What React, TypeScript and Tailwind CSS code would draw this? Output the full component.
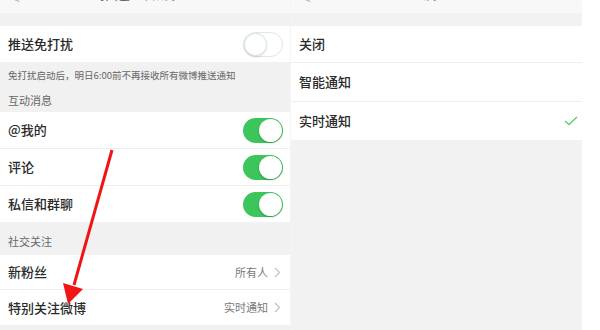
import React from "react";

const font = { fontFamily: '"Noto Sans CJK SC", "Noto Sans", sans-serif' };

function Toggle({ on }: { on: boolean }) {
    if (on) {
        return (
            <div className="relative h-[25px] w-[40px] rounded-full bg-[#3cc55a]">
                <div className="absolute right-[1px] top-[1px] h-[23px] w-[23px] rounded-full bg-white shadow-[0_1px_2px_rgba(0,0,0,0.25)]" />
            </div>
        );
    }
    return (
        <div className="relative h-[25px] w-[40px] rounded-full border border-[#dfe8df] bg-white">
            <div className="absolute left-0 top-0 h-[23px] w-[23px] rounded-full border border-[#d8e6d8] bg-white shadow-[0_1px_2px_rgba(0,0,0,0.12)]" />
        </div>
    );
}

function Chevron() {
    return (
        <svg width="7" height="11" viewBox="0 0 7 11" className="ml-[6px]">
            <path d="M1 1 L5.5 5.5 L1 10" fill="none" stroke="#c4c4c4" strokeWidth="1.3" />
        </svg>
    );
}

function Header({ title }: { title: string }) {
    return (
        <div className="relative h-[13px] overflow-hidden bg-[#f8f8f8]">
            <div className="-mt-[15px] flex h-[16px] items-center justify-center text-[15px] leading-[16px] text-[#666]">
                {title}
            </div>
            <div className="absolute left-[12px] -top-[12px] text-[14px] text-[#aaa]">&lt;</div>
        </div>
    );
}

function Row({
    label,
    h,
    right,
    border = true,
}: {
    label: string;
    h: string;
    right?: React.ReactNode;
    border?: boolean;
}) {
    return (
        <div
            className={`flex ${h} items-center justify-between bg-white pl-[8px] pr-[7px] ${
                border ? "border-b border-[#efefef]" : ""
            }`}
        >
            <span className="text-[13px] font-medium text-[#2a2a2a]">{label}</span>
            {right}
        </div>
    );
}

function Value({ text }: { text: string }) {
    return (
        <div className="flex items-center pr-[2px]">
            <span className="text-[11px] text-[#7a7a7a]">{text}</span>
            <Chevron />
        </div>
    );
}

export default function App() {
    return (
        <div className="relative flex h-[330px] w-[600px] overflow-hidden bg-white" style={font}>
            {/* left screen */}
            <div className="flex w-[290px] flex-col bg-[#f1f1f1]">
                <Header title="推送通知设置" />
                <div className="h-[13px]" />
                <Row label="推送免打扰" h="h-[36px]" border={false} right={<Toggle on={false} />} />
                <div className="flex h-[26px] items-center pl-[8px] text-[9.5px] text-[#666]">
                    免打扰启动后，明日6:00前不再接收所有微博推送通知
                </div>
                <div className="flex h-[24px] items-center pl-[8px] text-[11px] text-[#666]">互动消息</div>
                <Row label="@我的" h="h-[37px]" right={<Toggle on />} />
                <Row label="评论" h="h-[37px]" right={<Toggle on />} />
                <Row label="私信和群聊" h="h-[36px]" border={false} right={<Toggle on />} />
                <div className="flex h-[33px] items-end pb-[6px] pl-[8px] text-[11px] text-[#666]">社交关注</div>
                <Row label="新粉丝" h="h-[35px]" right={<Value text="所有人" />} />
                <Row label="特别关注微博" h="h-[35px]" border={false} right={<Value text="实时通知" />} />
                <div className="flex-1" />
            </div>

            {/* right screen */}
            <div className="flex w-[292px] flex-col border-l border-[#f4f4f4] bg-[#f2f2f2]">
                <Header title="设置" />
                <div className="h-[13px]" />
                <Row label="关闭" h="h-[37px]" />
                <Row label="智能通知" h="h-[39px]" />
                <Row
                    label="实时通知"
                    h="h-[38px]"
                    border={false}
                    right={
                        <svg width="14" height="10" viewBox="0 0 14 10" className="-mr-[3px]">
                            <path d="M1 5 L5 8.5 L13 1" fill="none" stroke="#5ccf72" strokeWidth="1.4" />
                        </svg>
                    }
                />
                <div className="flex-1" />
            </div>

            {/* red annotation arrow */}
            <svg className="pointer-events-none absolute left-0 top-0" width="600" height="330">
                <line x1="112" y1="150" x2="74" y2="285" stroke="#f01414" strokeWidth="3" />
                <polygon points="68,304 63,283 83,289" fill="#f01414" />
            </svg>
        </div>
    );
}
